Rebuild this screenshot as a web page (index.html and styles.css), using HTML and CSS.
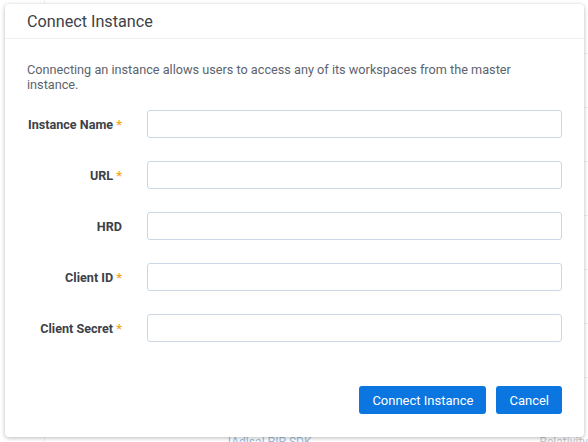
FILE: index.html
```html
<!DOCTYPE html>
<html lang="en">
  <head>
    <meta charset="UTF-8" />
    <meta name="viewport" content="width=device-width, initial-scale=1.0" />
    <title>Connect Instance</title>
    <link rel="stylesheet" href="styles.css">
  </head>
  <body>
    <div class="page">
      <div class="page-rows">
        <div class="page-row"></div>
        <div class="page-row"></div>
        <div class="page-row"></div>
        <div class="page-row"></div>
        <div class="page-row"></div>
        <div class="page-row"></div>
        <div class="page-row"></div>
        <div class="page-row last">
          <span class="page-link">[Adlsa] PIP SDK</span>
          <span class="page-muted">Relativity</span>
        </div>
      </div>
    </div>

    <div class="modal">
      <div class="modal-header">Connect Instance</div>
      <div class="modal-body">
        <p class="intro">
          Connecting an instance allows users to access any of its workspaces from the master
          instance.
        </p>
        <form class="fields">
          <label class="field-label" for="name">Instance Name <span class="req">*</span></label>
          <input class="field-input" id="name" type="text" />

          <label class="field-label" for="url">URL <span class="req">*</span></label>
          <input class="field-input" id="url" type="text" />

          <label class="field-label" for="hrd">HRD</label>
          <input class="field-input" id="hrd" type="text" />

          <label class="field-label" for="client-id">Client ID <span class="req">*</span></label>
          <input class="field-input" id="client-id" type="text" />

          <label class="field-label" for="client-secret">Client Secret <span class="req">*</span></label>
          <input class="field-input" id="client-secret" type="text" />
        </form>
      </div>
      <div class="modal-footer">
        <button class="btn" type="button">Connect Instance</button>
        <button class="btn" type="button">Cancel</button>
      </div>
    </div>
  </body>
</html>
```

FILE: styles.css
```css
html,
body {
  height: 100%;
}
body {
  margin: 0;
  background: #fff;
  font-family: Roboto, "Liberation Sans", sans-serif;
  overflow: hidden;
}

/* faint page behind the dialog */
.page {
  height: 100%;
  border-left: 1px solid #eef0f3;
  margin-left: 44px;
}
.page-rows {
  display: flex;
  flex-direction: column;
}
.page-row {
  height: 53px;
  border-bottom: 1px solid #f0f2f5;
}
.page-row.last {
  border-bottom: none;
  display: flex;
  justify-content: space-between;
  align-items: flex-end;
  height: 71px;
  font-size: 12px;
  padding: 0 0 0 183px;
}
.page-link {
  color: #9dbde0;
}
.page-muted {
  color: #c4c8cd;
}

/* dialog */
.modal {
  position: absolute;
  left: 5px;
  top: 4px;
  width: 579px;
  height: 433px;
  box-sizing: border-box;
  background: #fff;
  border-radius: 4px;
  box-shadow: 0 1px 4px rgba(0, 0, 0, 0.28);
  display: flex;
  flex-direction: column;
}
.modal-header {
  height: 35px;
  box-sizing: border-box;
  padding: 8px 22px 0;
  font-size: 16.2px;
  color: #3e4247;
  border-bottom: 1px solid #edf1f5;
}
.modal-body {
  padding: 23px 22px 0;
  flex: 1;
}
.intro {
  margin: 0 0 18px;
  font-size: 12.7px;
  line-height: 15px;
  color: #5c636d;
}
.fields {
  display: grid;
  grid-template-columns: 95px 1fr;
  column-gap: 25px;
  row-gap: 23px;
  align-items: center;
}
.field-label {
  text-align: right;
  font-size: 12.6px;
  font-weight: bold;
  color: #3d4147;
}
.req {
  color: #f5a623;
}
.field-input {
  height: 28px;
  box-sizing: border-box;
  border: 1px solid #cbd7e4;
  border-radius: 3px;
  padding: 0 8px;
  font: inherit;
}
.modal-footer {
  display: flex;
  justify-content: flex-end;
  gap: 10px;
  padding: 0 22px 23px;
}
.btn {
  height: 28px;
  padding: 0 13px;
  border: none;
  border-radius: 3px;
  background: #0b76df;
  color: #fff;
  font-family: inherit;
  font-size: 13px;
}
```
